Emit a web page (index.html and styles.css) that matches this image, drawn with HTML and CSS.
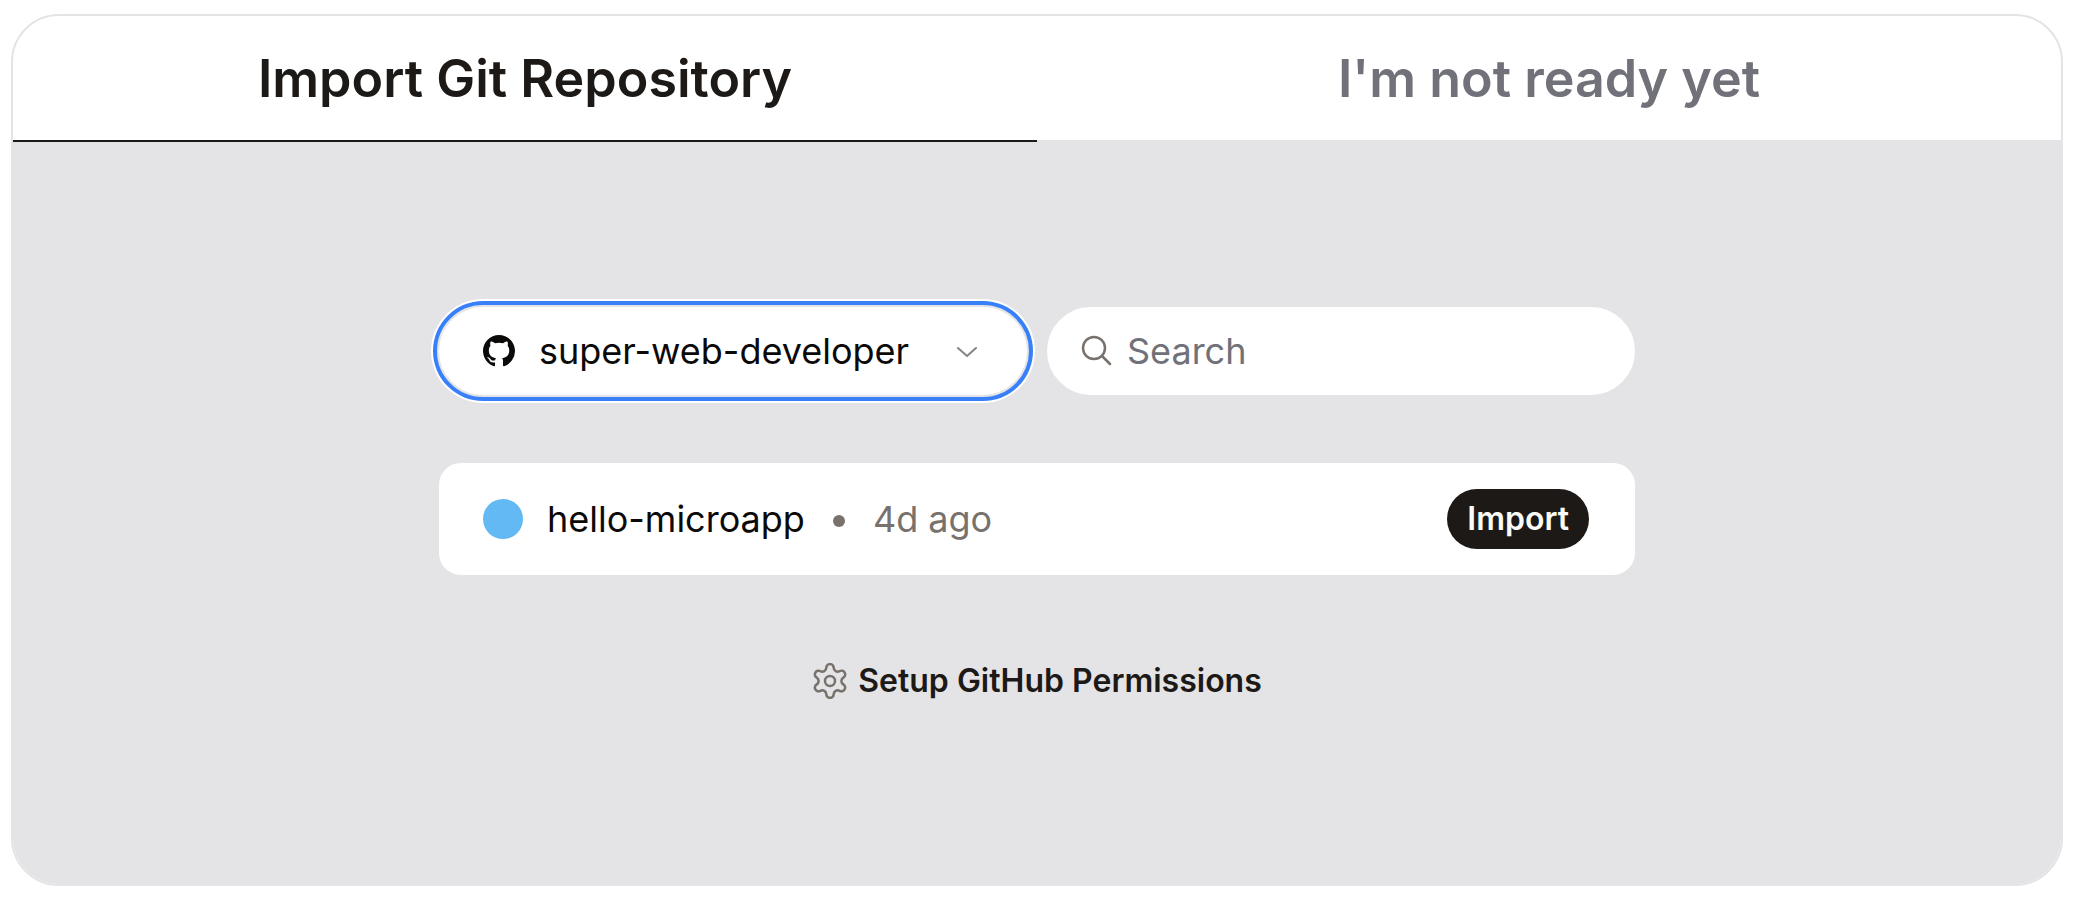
FILE: index.html
```html
<!DOCTYPE html>
<html lang="en">
  <head>
    <meta charset="utf-8">
    <title>Import Git Repository</title>
    <link rel="stylesheet" href="styles.css">
  </head>
  <body>
    <main class="card">
      <div class="tabs" role="tablist">
        <button class="tab active" type="button" role="tab" aria-selected="true">Import Git Repository</button>
        <button class="tab" type="button" role="tab" aria-selected="false">I'm not ready yet</button>
      </div>
      <div class="panel" role="tabpanel">
        <div class="content">
          <div class="filters">
            <div class="field account">
              <svg class="github" viewBox="0 0 16 16" fill="currentColor" aria-hidden="true">
                <path d="M8 0C3.58 0 0 3.58 0 8c0 3.54 2.29 6.53 5.47 7.59.4.07.55-.17.55-.38 0-.19-.01-.82-.01-1.49-2.01.37-2.53-.49-2.69-.94-.09-.23-.48-.94-.82-1.13-.28-.15-.68-.52-.01-.53.63-.01 1.08.58 1.23.82.72 1.21 1.87.87 2.33.66.07-.52.28-.87.51-1.07-1.78-.2-3.64-.89-3.64-3.95 0-.87.31-1.59.82-2.15-.08-.2-.36-1.02.08-2.12 0 0 .67-.21 2.2.82.64-.18 1.32-.27 2-.27s1.36.09 2 .27c1.53-1.04 2.2-.82 2.2-.82.44 1.1.16 1.92.08 2.12.51.56.82 1.27.82 2.15 0 3.07-1.87 3.75-3.65 3.95.29.25.54.73.54 1.48 0 1.07-.01 1.93-.01 2.2 0 .21.15.46.55.38A8.01 8.01 0 0 0 16 8c0-4.42-3.58-8-8-8z"/>
              </svg>
              <select class="account-select" aria-label="Git account">
                <option>super-web-developer</option>
              </select>
              <svg class="chevron" viewBox="0 0 20 14" aria-hidden="true">
                <path d="M1 4l9 8 9-8"/>
              </svg>
            </div>
            <div class="field search">
              <svg class="search-icon" viewBox="0 0 32 32" aria-hidden="true">
                <circle cx="13" cy="13" r="11"/>
                <path d="M21 21l8 8"/>
              </svg>
              <input class="search-input" type="text" placeholder="Search" aria-label="Search repositories">
            </div>
          </div>
          <div class="repo">
            <span class="avatar"></span>
            <span class="repo-name">hello-microapp</span>
            <span class="dot"></span>
            <span class="date">4d ago</span>
            <button class="import" type="button">Import</button>
          </div>
          <button class="permissions" type="button">
            <svg class="gear" viewBox="0 0 36 36" aria-hidden="true">
              <circle cx="18" cy="18" r="5"/>
              <path d="M14.3 4.8A3.7 3.7 0 0 1 21.7 4.8A4 4 0 0 0 27.58 8.19A3.7 3.7 0 0 1 31.28 14.6A4 4 0 0 0 31.28 21.4A3.7 3.7 0 0 1 27.58 27.81A4 4 0 0 0 21.7 31.2A3.7 3.7 0 0 1 14.3 31.2A4 4 0 0 0 8.42 27.81A3.7 3.7 0 0 1 4.72 21.4A4 4 0 0 0 4.72 14.6A3.7 3.7 0 0 1 8.42 8.19A4 4 0 0 0 14.3 4.8z"/>
            </svg>
            Setup GitHub Permissions
          </button>
        </div>
      </div>
    </main>
  </body>
</html>
```
FILE: styles.css
```css
* {
  box-sizing: border-box;
}

body {
  margin: 0;
  padding: 14px 11px;
  min-height: 100vh;
  display: flex;
  background: #fff;
  color: #0c0a09;
  font-family: Inter, "Liberation Sans", sans-serif;
  font-size: 36px;
  line-height: 48px;
}

button,
input,
select {
  font: inherit;
  color: inherit;
  border: 0;
  padding: 0;
  background: none;
}

button {
  cursor: pointer;
}

svg {
  flex: none;
  fill: none;
  stroke: #78716c;
  stroke-width: 2.5;
  stroke-linecap: round;
  stroke-linejoin: round;
}

.card {
  flex: 1;
  display: flex;
  flex-direction: column;
  border: 2px solid #e4e4e6;
  border-radius: 48px;
  overflow: hidden;
}

.tabs {
  display: grid;
  grid-template-columns: 1fr 1fr;
}

.tab {
  padding: 31px 0 29px;
  border-bottom: 2px solid #e4e4e6;
  color: #71717a;
  font-size: 52px;
  font-weight: 600;
  line-height: 64px;
}

.tab.active {
  border-color: #1c1917;
  color: #1c1917;
}

.panel {
  flex: 1;
  padding: 163px 32px 64px;
  background: #e4e4e6;
}

.content {
  display: flex;
  flex-direction: column;
  max-width: 1200px;
  margin: 0 auto;
}

.filters {
  display: grid;
  grid-template-columns: 1fr 1fr;
  gap: 16px;
}

.field {
  display: flex;
  align-items: center;
  min-width: 0;
  height: 92px;
  border: 2px solid #e4e4e6;
  border-radius: 46px;
  background: #fff;
}

.account {
  position: relative;
  padding-left: 44px;
  box-shadow: 0 0 0 4px #3880fa, 0 0 0 6px #fff;
}

.github {
  position: absolute;
  width: 32px;
  height: 32px;
  fill: currentColor;
  stroke: none;
}

.account-select {
  width: 100%;
  height: 100%;
  padding-left: 56px;
  appearance: none;
  outline: 0;
  border-radius: 46px;
}

.chevron {
  position: absolute;
  right: 50px;
  width: 20px;
  height: 14px;
  stroke: #858585;
  stroke-width: 2;
  pointer-events: none;
}

.search {
  gap: 14px;
  padding: 0 34px;
}

.search-icon {
  width: 32px;
  height: 32px;
}

.search-input {
  flex: 1;
  min-width: 0;
  outline: 0;
}

.search-input::placeholder {
  color: #71717a;
  opacity: 1;
}

.repo {
  display: flex;
  align-items: center;
  height: 116px;
  margin-top: 64px;
  padding: 0 46px 0 44px;
  border: 2px solid #e4e4e6;
  border-radius: 24px;
  background: #fff;
}

.avatar {
  width: 40px;
  height: 40px;
  margin-right: 24px;
  border-radius: 50%;
  background: #62b9f3;
}

.dot {
  width: 12px;
  height: 12px;
  margin: 4px 28px 0;
  border-radius: 50%;
  background: #78716c;
}

.date {
  color: #78716c;
}

.import {
  height: 60px;
  margin-left: auto;
  padding: 0 20px;
  border-radius: 30px;
  background: #1c1917;
  color: #fafaf9;
  font-size: 32px;
  font-weight: 600;
}

.permissions {
  display: flex;
  align-items: center;
  align-self: center;
  gap: 10px;
  height: 80px;
  margin-top: 64px;
  color: #1c1917;
  font-size: 32px;
  font-weight: 600;
}

.gear {
  width: 36px;
  height: 36px;
}
```
